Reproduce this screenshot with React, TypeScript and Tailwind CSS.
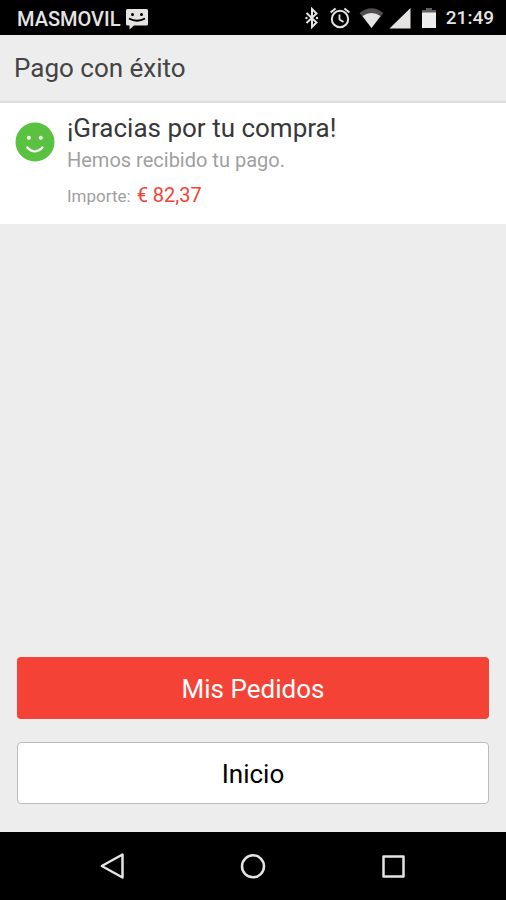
interface PaymentInterface {
    title: string
    message: string
    amountLabel: string
    amount: string
}

const payment: PaymentInterface = {
    title: "¡Gracias por tu compra!",
    message: "Hemos recibido tu pago.",
    amountLabel: "Importe:",
    amount: "€ 82,37"
}

function MessageIcon() {
    return (
        <svg width="22" height="21" viewBox="0 0 22 21" className="mt-1" aria-hidden="true">
            <path d="M1.5 0H20.5Q22 0 22 1.5V15Q22 16.5 20.5 16.5H8L3.5 20.5V16.5H1.5Q0 16.5 0 15V1.5Q0 0 1.5 0Z" fill="#e6e3e3" />
            <circle cx="6.5" cy="5.5" r="1.5" fill="black" />
            <circle cx="15.5" cy="5.5" r="1.5" fill="black" />
            <path d="M3 9.5Q11 14 19 9.5" fill="none" stroke="black" strokeWidth="1.8" />
        </svg>
    )
}

function StatusIcons() {
    return (
        <svg width="132" height="22" viewBox="0 0 132 22" fill="none" stroke="#e6e3e3" strokeWidth="2" aria-hidden="true">
            {/* bluetooth */}
            <path d="M1.5 6L11.5 15.5L7 20V2L11.5 6.5L1.5 16" strokeWidth="2" />
            <circle cx="1.5" cy="11" r="1.2" fill="#e6e3e3" stroke="none" />
            <circle cx="12" cy="11" r="1.2" fill="#e6e3e3" stroke="none" />
            {/* alarm */}
            <circle cx="35" cy="12" r="8.2" />
            <path d="M34.5 7.5V12.5L38.5 15" strokeWidth="1.8" />
            <path d="M25.6 5.6L30.6 1.4M44.4 5.6L39.4 1.4" />
            {/* wifi */}
            <path d="M54.5 6Q66.5 -3.5 78.5 6L66.5 21Z" fill="#4f4d4d" stroke="none" />
            <path d="M57.5 9Q66.5 3 75.5 9L66.5 21Z" fill="#e6e3e3" stroke="none" />
            {/* signal */}
            <path d="M84.5 21.5L105.5 1V21.5Z" fill="#e6e3e3" stroke="none" />
            {/* battery */}
            <path d="M121 1H127V3H131V6H117V3H121Z" fill="#5f5d5d" stroke="none" />
            <path d="M117 5.5H131V21H117Z" fill="#ececec" stroke="none" />
        </svg>
    )
}

function StatusBar() {
    return (
        <div className="flex h-[35px] items-center justify-between bg-black pl-[17px] pr-3 font-medium text-[#e6e3e3]">
            <div className="flex items-center gap-[6px]">
                <span className="pt-[2px] text-[20px]">MASMOVIL</span>
                <MessageIcon />
            </div>
            <div className="flex items-center gap-[9px]">
                <StatusIcons />
                <span className="pt-[2px] text-[19px]">21:49</span>
            </div>
        </div>
    )
}

function SmileIcon() {
    return (
        <svg width="40" height="40" viewBox="0 0 40 40" className="mt-[19px] shrink-0" aria-hidden="true">
            <circle cx="20" cy="20" r="19.5" fill="#5ac141" />
            <circle cx="13.8" cy="15.8" r="2" fill="white" />
            <circle cx="25.8" cy="15.8" r="2" fill="white" />
            <path d="M12.2 25.5Q19.8 33.5 27.4 25.5" fill="none" stroke="white" strokeWidth="2.2" strokeLinecap="round" />
        </svg>
    )
}

function PaymentCard({ title, message, amountLabel, amount }: PaymentInterface) {
    return (
        <section className="flex gap-3 bg-white px-[15px] pb-[11px]">
            <SmileIcon />
            <div className="pt-[7px]">
                <h2 className="text-[26px] leading-9 text-[#383838]">{title}</h2>
                <p className="text-[20px] leading-7 text-[#a0a0a0]">{message}</p>
                <p className="mt-1 flex items-baseline gap-[6px] leading-[34px]">
                    <span className="text-[17px] text-[#a0a0a0]">{amountLabel}</span>
                    <span className="text-[20px] text-[#f44336]">{amount}</span>
                </p>
            </div>
        </section>
    )
}

function NavBar() {
    return (
        <nav className="flex h-[68px] justify-center bg-black">
            <button aria-label="Atrás" className="flex w-[140px] items-center justify-center">
                <svg width="28" height="28" viewBox="0 0 28 28" fill="none" stroke="#e6e3e3" strokeWidth="2.5" strokeLinejoin="round">
                    <path d="M2.8 14L23.5 2.500V25.500Z" />
                </svg>
            </button>
            <button aria-label="Pantalla de inicio" className="flex w-[140px] items-center justify-center">
                <svg width="28" height="28" viewBox="0 0 28 28" fill="none" stroke="#e6e3e3" strokeWidth="2.5">
                    <circle cx="14" cy="14.300" r="11" />
                </svg>
            </button>
            <button aria-label="Recientes" className="flex w-[140px] items-center justify-center">
                <svg width="28" height="28" viewBox="0 0 28 28" fill="none" stroke="#e6e3e3" strokeWidth="2.5" strokeLinejoin="round">
                    <rect x="4.500" y="4.500" width="20" height="20" />
                </svg>
            </button>
        </nav>
    )
}

export default function App() {
    return (
        <div className="flex min-h-screen flex-col bg-[#ededed] font-[Roboto,sans-serif]">
            <StatusBar />
            <header className="flex h-[68px] items-center border-b-2 border-[#dedede] px-[14px]">
                <h1 className="text-[26px] text-[#444444]">Pago con éxito</h1>
            </header>

            <main className="flex grow flex-col">
                <PaymentCard {...payment} />
                <div className="mt-auto flex flex-col gap-[23px] px-[17px] pb-7 text-[26px]">
                    <button className="h-[62px] rounded bg-[#f44336] pt-[2px] text-white">Mis Pedidos</button>
                    <button className="h-[62px] rounded border border-[#bcbcbc] bg-white pt-[2px] text-black">Inicio</button>
                </div>
            </main>

            <NavBar />
        </div>
    )
}
